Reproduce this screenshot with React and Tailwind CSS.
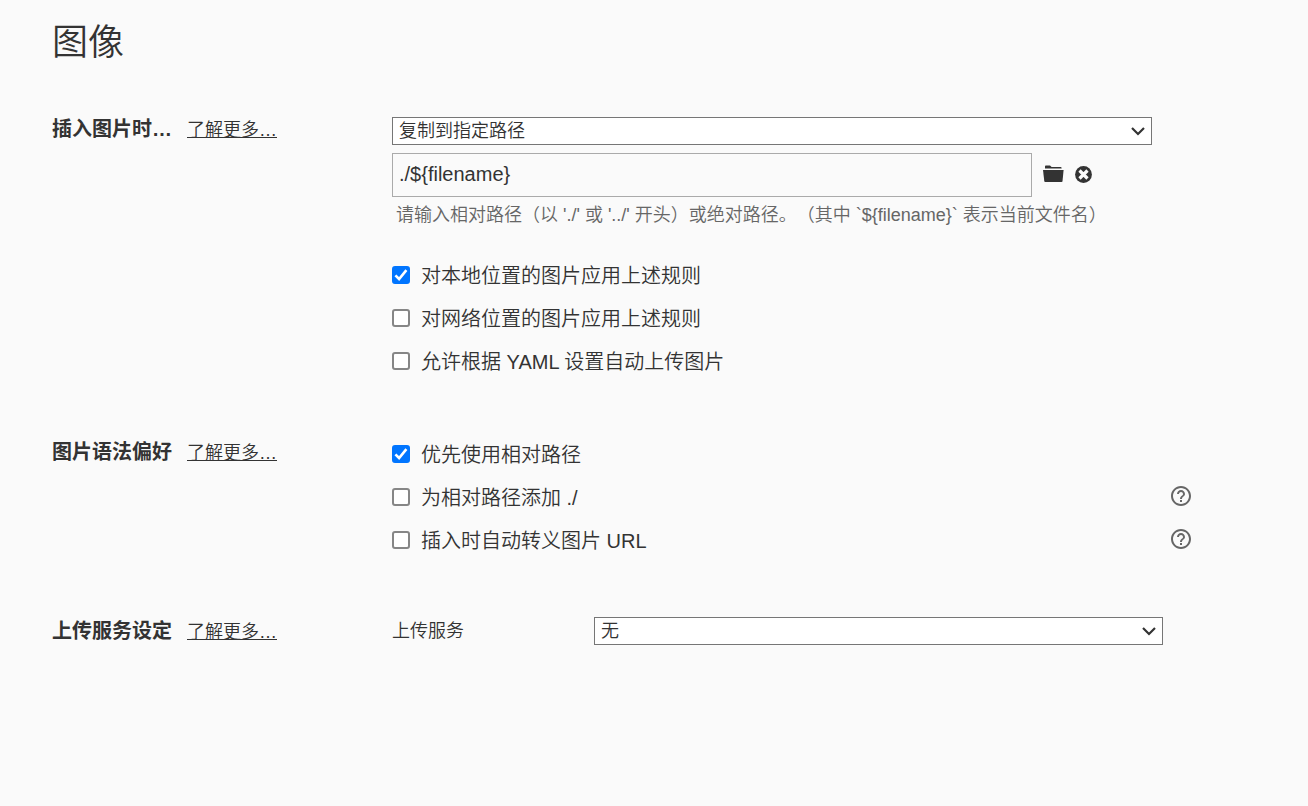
import { useId, useState } from 'react';
import { MdHelpOutline } from 'react-icons/md';

// ── Icons ──────────────────────────────────────────
function FolderIcon() {
  return (
    <svg width="21" height="18" viewBox="0 0 21 18" fill="currentColor" aria-hidden="true">
      <path d="M2 3.6V1.4Q2 .6 2.8 .6H7L8.6 2H17.6Q18.6 2 18.6 3V3.6Z" />
      <path d="M0 5H20.6L19.5 16.2Q19.4 17 18.6 17H2.2Q1.4 17 1.3 16.2Z" />
    </svg>
  );
}

function ClearIcon() {
  return (
    <svg width="17" height="17" viewBox="0 0 17 17" aria-hidden="true">
      <circle cx="8.5" cy="8.5" r="8.4" fill="currentColor" />
      <path d="M4.5 4.5L12.5 12.5M12.5 4.5L4.5 12.5" stroke="#fafafa" strokeWidth="3.2" />
    </svg>
  );
}

// ── Form parts ──────────────────────────────────────────
function Select({ options, className, ...props }) {
  return (
    <div className={`relative ${className}`}>
      <select
        {...props}
        className="block h-7 w-full appearance-none rounded-none border border-[#767676] bg-white pr-8 pl-1.5 text-[18px] leading-6"
      >
        {options.map((option) => (
          <option key={option}>{option}</option>
        ))}
      </select>
      <svg
        className="pointer-events-none absolute top-2.5 right-[7px]"
        width="14"
        height="9"
        viewBox="0 0 14 9"
        fill="none"
        stroke="currentColor"
        strokeWidth="2.2"
        aria-hidden="true"
      >
        <path d="M1 1L7 7L13 1" />
      </svg>
    </div>
  );
}

function CheckRow({ label, defaultChecked = false, help = false }) {
  const id = useId();
  const [checked, setChecked] = useState(defaultChecked);

  return (
    <div className="flex h-[43px] items-center">
      <span className="relative mr-[11px] size-[18px] shrink-0">
        <input
          id={id}
          type="checkbox"
          checked={checked}
          onChange={(e) => setChecked(e.target.checked)}
          className="block size-[18px] appearance-none rounded-[3px] border-2 border-[#868686] bg-white checked:border-[#0075ff] checked:bg-[#0075ff]"
        />
        {checked && (
          <svg
            className="pointer-events-none absolute inset-0"
            width="18"
            height="18"
            viewBox="0 0 18 18"
            fill="none"
            stroke="#fff"
            strokeWidth="2.6"
            aria-hidden="true"
          >
            <path d="M3.4 9.3L7.1 13L14.4 4.2" />
          </svg>
        )}
      </span>
      <label htmlFor={id} className="pt-0.5 text-[20px] leading-6">{label}</label>
      {help && (
        <button type="button" aria-label="帮助" className="ml-auto pb-0.5 text-[#666]">
          <MdHelpOutline size={24} />
        </button>
      )}
    </div>
  );
}

function Section({ title, children }) {
  return (
    <section className="grid grid-cols-[340px_1fr]">
      <div className="flex items-baseline gap-[17px] pt-2">
        <h2 className="w-[118px] text-[20px] leading-6 font-bold whitespace-nowrap">{title}</h2>
        <a href="#more" className="text-[18px] leading-6 font-[350] underline">了解更多…</a>
      </div>
      <div className="font-[350]">{children}</div>
    </section>
  );
}

export default function App() {
  const [path, setPath] = useState('./${filename}');

  return (
    <main
      lang="zh-CN"
      className="min-h-screen bg-[#fafafa] pt-[21px] pr-[115px] pb-10 pl-[52px] font-['Liberation_Sans','Noto_Sans_CJK_SC',sans-serif] text-[#333] [text-spacing-trim:space-all]"
    >
      <h1 className="mb-11 text-[36px] leading-[44px] font-[350]">图像</h1>

      <div className="flex flex-col gap-[50px]">
        <Section title="插入图片时…">
          <div className="pt-2">
            <Select aria-label="插入图片时" options={['复制到指定路径']} className="mr-[41px]" />
            <div className="mt-2 mr-[101px] flex items-center gap-[11px]">
              <input
                type="text"
                aria-label="图片路径"
                value={path}
                onChange={(e) => setPath(e.target.value)}
                className="h-11 min-w-0 flex-1 border border-[#aaa] px-1.5 pb-0.5 text-[20px]"
              />
              <button type="button" aria-label="选择文件夹" className="pb-0.5"><FolderIcon /></button>
              <button type="button" aria-label="清除" className="pb-0.5"><ClearIcon /></button>
            </div>
            <p className="mt-1 mb-6 pl-1 text-[18px] leading-7 text-[#666]">
              请输入相对路径（以 './' 或 '../' 开头）或绝对路径。（其中 `${'{filename}'}` 表示当前文件名）
            </p>
            <CheckRow label="对本地位置的图片应用上述规则" defaultChecked />
            <CheckRow label="对网络位置的图片应用上述规则" />
            <CheckRow label="允许根据 YAML 设置自动上传图片" />
          </div>
        </Section>

        <Section title="图片语法偏好">
          <CheckRow label="优先使用相对路径" defaultChecked />
          <CheckRow label="为相对路径添加 ./" help />
          <CheckRow label="插入时自动转义图片 URL" help />
        </Section>

        <Section title="上传服务设定">
          <div className="flex items-center pt-1.5">
            <label htmlFor="upload-service" className="w-[202px] text-[18px] leading-7">上传服务</label>
            <Select id="upload-service" options={['无']} className="mr-[30px] flex-1" />
          </div>
        </Section>
      </div>
    </main>
  );
}
